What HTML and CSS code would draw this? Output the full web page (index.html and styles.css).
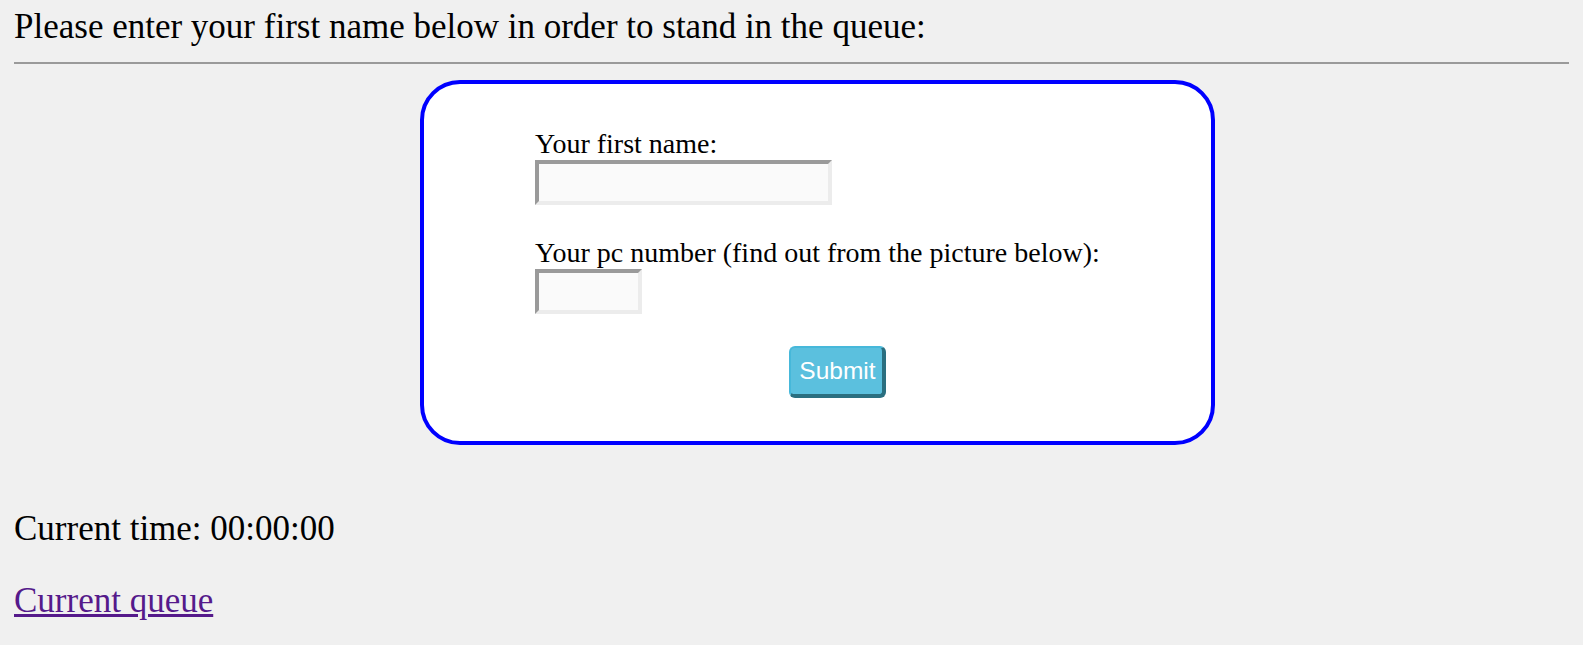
FILE: index.html
```html
<!DOCTYPE html>
<html>
<head>
<meta charset="utf-8">
<link rel="stylesheet" href="styles.css">
</head>
<body>
<div class="page">
  <div class="intro">Please enter your first name below in order to stand in the queue:</div>
  <hr class="rule">
  <div class="box">
    <form class="queue-form">
      <label class="label" for="fname">Your first name:</label>
      <input class="field field-name" id="fname" type="text">
      <label class="label label-pc" for="pc">Your pc number (find out from the picture below):</label>
      <input class="field field-pc" id="pc" type="text">
      <div class="actions"><button class="submit" type="button">Submit</button></div>
    </form>
  </div>
  <p class="time">Current time: 00:00:00</p>
  <p class="queue-link"><a class="link" href="#">Current queue</a></p>
</div>
</body>
</html>
```
FILE: styles.css
```css
html, body {
  margin: 0;
  padding: 0;
  background: #f0f0f0;
}
.page {
  padding: 7px 14px 0 14px;
  font-family: "Liberation Serif", "Times New Roman", serif;
  color: #000;
}
.intro {
  font-size: 35px;
  line-height: 40px;
}
.rule {
  margin: 15px 0 0 0;
  border: none;
  border-top: 2px solid #9a9a9a;
  height: 0;
}
.box {
  box-sizing: border-box;
  margin: 16px 0 0 406px;
  width: 795px;
  height: 365px;
  border: 4px solid #0000ff;
  border-radius: 40px;
  background: #fff;
  padding: 44px 0 0 111px;
}
.queue-form {
  display: flex;
  flex-direction: column;
  align-items: flex-start;
}
.label {
  font-size: 28px;
  line-height: 32px;
  display: block;
}
.label-pc {
  margin-top: 32px;
}
.field {
  box-sizing: border-box;
  height: 45px;
  margin-top: 0;
  background: #fafafa;
  border-style: solid;
  border-width: 4px;
  border-color: #9a9a9a #ececec #ececec #9a9a9a;
  padding: 0;
  font-size: 24px;
}
.field-name {
  width: 297px;
}
.field-pc {
  width: 107px;
}
.actions {
  margin-top: 32px;
  padding-left: 254px;
}
.submit {
  box-sizing: border-box;
  width: 97px;
  height: 52px;
  background: #5bc0de;
  color: #fff;
  font-family: "Liberation Sans", Arial, sans-serif;
  font-size: 24.5px;
  border-style: solid;
  border-width: 2px 4px 4px 2px;
  border-color: #46b8da #2a6f80 #2a6f80 #46b8da;
  border-radius: 6px;
  padding: 0 0 0 2px;
}
.time {
  font-size: 35px;
  line-height: 40px;
  margin: 64px 0 0 0;
}
.queue-link {
  font-size: 35px;
  line-height: 40px;
  margin: 32px 0 0 0;
}
.link {
  color: #551a8b;
}
```
